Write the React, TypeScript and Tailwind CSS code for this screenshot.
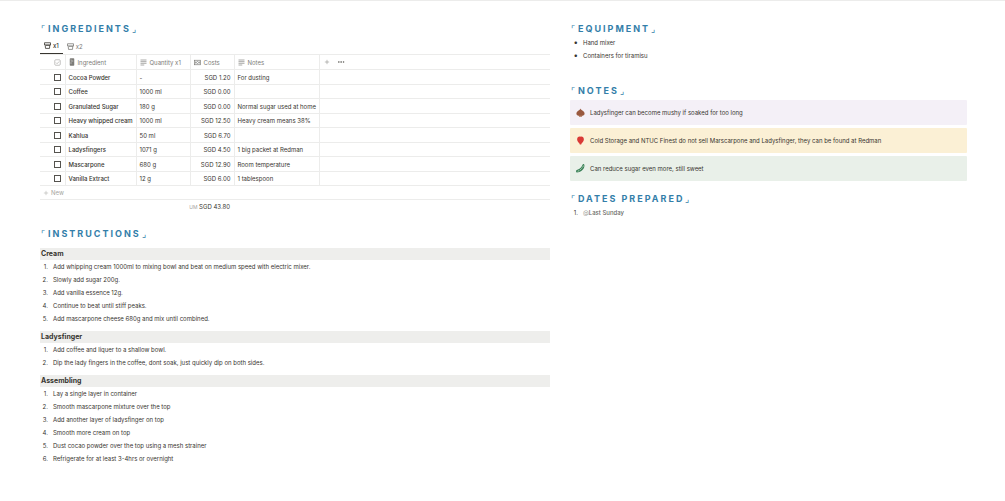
import type { ReactNode } from "react";
import { MoreHorizontal, Plus } from "lucide-react";

interface Ingredient {
  name: string;
  quantity: string;
  cost: string;
  notes?: string;
}

const ingredients: Ingredient[] = [
  { name: "Cocoa Powder", quantity: "-", cost: "SGD 1.20", notes: "For dusting" },
  { name: "Coffee", quantity: "1000 ml", cost: "SGD 0.00" },
  { name: "Granulated Sugar", quantity: "180 g", cost: "SGD 0.00", notes: "Normal sugar used at home" },
  { name: "Heavy whipped cream", quantity: "1000 ml", cost: "SGD 12.50", notes: "Heavy cream means 38%" },
  { name: "Kahlua", quantity: "50 ml", cost: "SGD 6.70" },
  { name: "Ladysfingers", quantity: "1071 g", cost: "SGD 4.50", notes: "1 big packet at Redman" },
  { name: "Mascarpone", quantity: "680 g", cost: "SGD 12.90", notes: "Room temperature" },
  { name: "Vanilla Extract", quantity: "12 g", cost: "SGD 6.00", notes: "1 tablespoon" },
];

const instructions = [
  {
    title: "Cream",
    steps: [
      "Add whipping cream 1000ml to mixing bowl and beat on medium speed with electric mixer.",
      "Slowly add sugar 200g.",
      "Add vanilla essence 12g.",
      "Continue to beat until stiff peaks.",
      "Add mascarpone cheese 680g and mix until combined.",
    ],
  },
  {
    title: "Ladysfinger",
    steps: [
      "Add coffee and liquer to a shallow bowl.",
      "Dip the lady fingers in the coffee, dont soak, just quickly dip on both sides.",
    ],
  },
  {
    title: "Assembling",
    steps: [
      "Lay a single layer in container",
      "Smooth mascarpone mixture over the top",
      "Add another layer of ladysfinger on top",
      "Smooth more cream on top",
      "Dust cocao powder over the top using a mesh strainer",
      "Refrigerate for at least 3-4hrs or overnight",
    ],
  },
];

const CupIcon = () => (
  <svg viewBox="0 0 14 14" className="w-[7px] h-[7px] shrink-0" fill="none" stroke="currentColor" strokeWidth="1.6">
    <path d="M1 1.500h12v4.500l-1.500 1L11 12.800H3L2.500 7 1 6z" />
    <path d="M1.500 5h11v2.500h-9z" fill="currentColor" stroke="none" />
  </svg>
);

const CheckIcon = () => (
  <svg viewBox="0 0 14 14" className="w-[7px] h-[7px]" fill="none" stroke="currentColor" strokeWidth="1.3">
    <rect x="1.5" y="1.5" width="11" height="11" rx="2" />
    <path d="M4 7.2l2.2 2.2L10.2 5" />
  </svg>
);

const JarIcon = () => (
  <svg viewBox="0 0 12 16" className="w-[6px] h-[8px] shrink-0" fill="currentColor">
    <rect x="1.5" y="0.5" width="9" height="15" rx="1.5" />
    <path d="M3.5 6h5M4 3v1.5M4 8.5v3" stroke="#fff" strokeWidth="1" />
  </svg>
);

const LinesIcon = () => (
  <svg viewBox="0 0 14 14" className="w-[7px] h-[7px] shrink-0" fill="none" stroke="currentColor" strokeWidth="1.3">
    <path d="M1 2h12M1 5.3h12M1 8.6h12M1 12h7.5" />
  </svg>
);

const MoneyIcon = () => (
  <svg viewBox="0 0 14 14" className="w-[7px] h-[7px] shrink-0" fill="none" stroke="currentColor" strokeWidth="1.4">
    <rect x="0.8" y="2.5" width="12.4" height="9" />
    <circle cx="7" cy="7" r="2" />
    <path d="M3 5v4M11 5v4" />
  </svg>
);

const ChestnutIcon = () => (
  <svg viewBox="0 0 20 20" className="w-[9px] h-[9px] shrink-0">
    <path d="M10 1c.8 2.500 2.500 3.500 5 5 3 1.800 4.500 4.500 4 7.500-.5 2.500-2.500 3.500-5 3.500l-1 1.800H7L6 17c-2.500 0-4.500-1-5-3.500-.5-3 1-5.700 4-7.500 2.500-1.500 4.200-2.500 5-5z" fill="#99593f" />
    <path d="M6 16.500h8l-1 2.300H7z" fill="#b17a5c" />
  </svg>
);

const BerryIcon = () => (
  <svg viewBox="0 0 20 20" className="w-[9px] h-[9px] shrink-0">
    <path d="M10 1.500c5-.8 7.500 2 7.500 6 0 3.500-2.500 6-4.500 8.200L11.500 19h-3L7 15.700C5 13.500 2.500 11 2.500 7.500c0-4 2.500-6.800 7.500-6z" fill="#d93a36" />
  </svg>
);

const PeaIcon = () => (
  <svg viewBox="0 0 20 20" className="w-[9px] h-[9px] shrink-0">
    <path d="M18 .5c3 6-3 17.500-16.500 18.500C-1 17 0 13 3 12.500 8.500 11 12 7 14 2.500c.8-2 2.800-3.200 4-2z" fill="#3a8058" />
    <path d="M4.500 15.800l1.500-.6M8.800 13.300l1.300-1.100M12.600 9.700l1-1.400M15.600 5.800l.5-1.400" stroke="#b9d9bd" strokeWidth="2" strokeLinecap="round" />
  </svg>
);

const notes = [
  { text: "Ladysfinger can become mushy if soaked for too long", icon: <ChestnutIcon />, color: "bg-[#f4f0f7]" },
  {
    text: "Cold Storage and NTUC Finest do not sell Marscarpone and Ladysfinger, they can be found at Redman",
    icon: <BerryIcon />,
    color: "bg-[#fbf0d5]",
  },
  { text: "Can reduce sugar even more, still sweet", icon: <PeaIcon />, color: "bg-[#e9f0e9]" },
];

const SectionTitle = ({ children }: { children: ReactNode }) => (
  <h2 className="flex h-4 items-center gap-px pl-px pt-px text-[9px] leading-4 font-bold tracking-[2px] text-[#337ea9]">
    <span className="font-normal">⌜</span>
    {children}
    <span className="font-normal">⌟</span>
  </h2>
);

const ColumnLabel = ({ icon, children }: { icon: ReactNode; children: ReactNode }) => (
  <span className="flex items-center gap-[3px]">
    {icon}
    {children}
  </span>
);

const IngredientsTable = () => (
  <table className="w-full table-fixed border-collapse border-y border-[#ececeb] text-left whitespace-nowrap">
    <thead>
      <tr className="h-[15px] text-[#7d7c78] [&>th]:border-r [&>th]:border-[#ececeb] [&>th]:px-1 [&>th]:py-0 [&>th]:font-normal">
        <th className="w-[25px]">
          <span className="flex justify-end text-[#a5a4a0]"><CheckIcon /></span>
        </th>
        <th className="w-[71px] px-[3px]!"><ColumnLabel icon={<JarIcon />}>Ingredient</ColumnLabel></th>
        <th className="w-[54px] px-[3px]!"><ColumnLabel icon={<LinesIcon />}>Quantity x1</ColumnLabel></th>
        <th className="w-[44px] px-[3px]!"><ColumnLabel icon={<MoneyIcon />}>Costs</ColumnLabel></th>
        <th className="w-[85px] px-[3px]!"><ColumnLabel icon={<LinesIcon />}>Notes</ColumnLabel></th>
        <th className="border-r-0!">
          <span className="flex items-center gap-[7px]">
            <button type="button" aria-label="Add column"><Plus className="h-[6px] w-[6px]" /></button>
            <button type="button" aria-label="More"><MoreHorizontal className="h-2 w-2" strokeWidth={3} /></button>
          </span>
        </th>
      </tr>
    </thead>
    <tbody>
      {ingredients.map((item) => (
        <tr
          key={item.name}
          className="odd:h-[15px] even:h-[14px] border-t border-[#ececeb] [&>td]:border-r [&>td]:border-[#ececeb] [&>td]:px-[3px] [&>td]:py-0"
        >
          <td className="px-1!">
            <input
              type="checkbox"
              aria-label={item.name}
              className="ml-auto block h-[7px] w-[7px] appearance-none border border-[#55534e] bg-white checked:bg-[#337ea9]"
            />
          </td>
          <td className="font-medium">{item.name}</td>
          <td>{item.quantity}</td>
          <td className="text-right">{item.cost}</td>
          <td>{item.notes}</td>
          <td className="border-r-0!" />
        </tr>
      ))}
    </tbody>
  </table>
);

export default function App() {
  return (
    <main className="border-t border-[#ececeb] bg-white pr-[38px] pl-10 font-['Inter',sans-serif] text-[6px] leading-[13px] text-[#37352f]">
      <div className="grid grid-cols-[510fr_397fr] gap-5 pt-[19px]">
        <div>
          <SectionTitle>INGREDIENTS</SectionTitle>

          {/* View tabs */}
          <div className="mt-0.5 flex h-4">
            <button type="button" className="flex items-center gap-0.5 border-b border-[#37352f] px-1 font-medium">
              <CupIcon />
              x1
            </button>
            <button type="button" className="flex items-center gap-0.5 px-1 text-[#7d7c78]">
              <CupIcon />
              x2
            </button>
          </div>

          <IngredientsTable />
          <button type="button" className="flex h-[14px] w-full items-center gap-0.5 border-b border-[#ececeb] px-[3px] text-[#a5a4a0]">
            <Plus className="h-[6px] w-[6px]" />
            New
          </button>
          <p className="w-[194px] pr-1 text-right">
            <span className="text-[5px] text-[#a5a4a0]">UM</span> SGD 43.80
          </p>

          {/* Steps */}
          <div className="mt-[11px] mb-[7px]">
            <SectionTitle>INSTRUCTIONS</SectionTitle>
          </div>
          <div className="flex flex-col gap-[6px]">
            {instructions.map((section) => (
              <section key={section.title}>
                <h3 className="h-3 bg-[#eeeeec] px-px text-[7px] leading-3 font-bold">{section.title}</h3>
                <ol>
                  {section.steps.map((step, i) => (
                    <li key={step} className="flex gap-[5px]">
                      <span className="w-2 text-right">{i + 1}.</span>
                      {step}
                    </li>
                  ))}
                </ol>
              </section>
            ))}
          </div>
        </div>

        <div>
          <SectionTitle>EQUIPMENT</SectionTitle>
          <ul>
            {["Hand mixer", "Containers for tiramisu"].map((item) => (
              <li key={item} className="flex gap-[5px]">
                <span className="w-2 text-right text-[8px]">•</span>
                {item}
              </li>
            ))}
          </ul>

          <div className="mt-5">
            <SectionTitle>NOTES</SectionTitle>
          </div>
          <div className="mt-0.5 flex flex-col gap-[3px]">
            {notes.map((note) => (
              <div key={note.text} className={`flex h-[25px] items-center gap-[5px] rounded-[1px] px-1.5 ${note.color}`}>
                {note.icon}
                <p>{note.text}</p>
              </div>
            ))}
          </div>

          <div className="mt-[9px]">
            <SectionTitle>DATES PREPARED</SectionTitle>
          </div>
          <ol>
            <li className="flex gap-[5px] text-[#6b6a66]">
              <span className="w-2 text-right text-[#37352f]">1.</span>
              <span className="font-medium">
                <span className="font-normal text-[#a5a4a0]">@</span>Last Sunday
              </span>
            </li>
          </ol>
        </div>
      </div>
    </main>
  );
}
